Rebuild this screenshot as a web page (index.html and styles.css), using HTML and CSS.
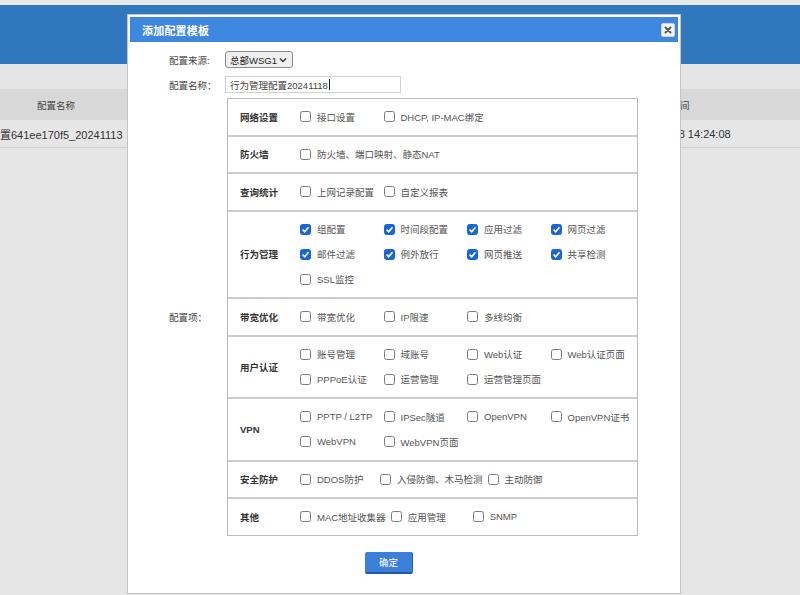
FILE: index.html
```html
<!DOCTYPE html>
<html lang="zh-CN">
<head>
<meta charset="utf-8">
<title>添加配置模板</title>
<link rel="stylesheet" href="styles.css">
</head>
<body>
<div class="page">
  <div class="strip"></div>
  <div class="banner"></div>
  <div class="toolbar"></div>
  <div class="bg-head">
    <div class="c-name">配置名称</div>
    <div class="c-time">时间</div>
  </div>
  <div class="bg-row">
    <div class="c-name c-left">置641ee170f5_20241113</div>
    <div class="c-time">2024-11-18 14:24:08</div>
  </div>
</div>

<div class="dialog">
  <div class="dlg-title">
    <span class="dlg-text">添加配置模板</span>
    <span class="close"><svg width="8" height="8" viewBox="0 0 8 8"><path d="M1.5 1.5 L6.5 6.5 M6.5 1.5 L1.5 6.5" stroke="#555" stroke-width="2" fill="none" stroke-linecap="round"/></svg></span>
  </div>
  <div class="dlg-body">
    <div class="form-row">
      <span class="lbl">配置来源:</span>
      <div class="select"><span>总部WSG1</span><svg width="8" height="6" viewBox="0 0 8 6"><path d="M1 1.5 L4 4.5 L7 1.5" stroke="#333" stroke-width="1.4" fill="none"/></svg></div>
    </div>
    <div class="form-row">
      <span class="lbl">配置名称：</span>
      <div class="input">行为管理配置20241118<span class="caret"></span></div>
    </div>
    <div class="form-row items-row">
      <span class="lbl">配置项：</span>
      <div class="cfg-table">
        <div class="cfg-row">
          <div class="cat">网络设置</div>
          <div class="opts">
            <label class="opt"><span class="box"></span>接口设置</label>
            <label class="opt"><span class="box"></span>DHCP, IP-MAC绑定</label>
          </div>
        </div>
        <div class="cfg-row">
          <div class="cat">防火墙</div>
          <div class="opts">
            <label class="opt"><span class="box"></span>防火墙、端口映射、静态NAT</label>
          </div>
        </div>
        <div class="cfg-row">
          <div class="cat">查询统计</div>
          <div class="opts">
            <label class="opt"><span class="box"></span>上网记录配置</label>
            <label class="opt"><span class="box"></span>自定义报表</label>
          </div>
        </div>
        <div class="cfg-row">
          <div class="cat">行为管理</div>
          <div class="opts">
            <label class="opt"><span class="box on"><svg width="11" height="11" viewBox="0 0 11 11"><path d="M2.6 5.7 L4.7 7.7 L8.5 3.3" stroke="#fff" stroke-width="1.7" fill="none"/></svg></span>组配置</label>
            <label class="opt"><span class="box on"><svg width="11" height="11" viewBox="0 0 11 11"><path d="M2.6 5.7 L4.7 7.7 L8.5 3.3" stroke="#fff" stroke-width="1.7" fill="none"/></svg></span>时间段配置</label>
            <label class="opt"><span class="box on"><svg width="11" height="11" viewBox="0 0 11 11"><path d="M2.6 5.7 L4.7 7.7 L8.5 3.3" stroke="#fff" stroke-width="1.7" fill="none"/></svg></span>应用过滤</label>
            <label class="opt"><span class="box on"><svg width="11" height="11" viewBox="0 0 11 11"><path d="M2.6 5.7 L4.7 7.7 L8.5 3.3" stroke="#fff" stroke-width="1.7" fill="none"/></svg></span>网页过滤</label>
            <label class="opt"><span class="box on"><svg width="11" height="11" viewBox="0 0 11 11"><path d="M2.6 5.7 L4.7 7.7 L8.5 3.3" stroke="#fff" stroke-width="1.7" fill="none"/></svg></span>邮件过滤</label>
            <label class="opt"><span class="box on"><svg width="11" height="11" viewBox="0 0 11 11"><path d="M2.6 5.7 L4.7 7.7 L8.5 3.3" stroke="#fff" stroke-width="1.7" fill="none"/></svg></span>例外放行</label>
            <label class="opt"><span class="box on"><svg width="11" height="11" viewBox="0 0 11 11"><path d="M2.6 5.7 L4.7 7.7 L8.5 3.3" stroke="#fff" stroke-width="1.7" fill="none"/></svg></span>网页推送</label>
            <label class="opt"><span class="box on"><svg width="11" height="11" viewBox="0 0 11 11"><path d="M2.6 5.7 L4.7 7.7 L8.5 3.3" stroke="#fff" stroke-width="1.7" fill="none"/></svg></span>共享检测</label>
            <label class="opt"><span class="box"></span>SSL监控</label>
          </div>
        </div>
        <div class="cfg-row">
          <div class="cat">带宽优化</div>
          <div class="opts">
            <label class="opt"><span class="box"></span>带宽优化</label>
            <label class="opt"><span class="box"></span>IP限速</label>
            <label class="opt"><span class="box"></span>多线均衡</label>
          </div>
        </div>
        <div class="cfg-row">
          <div class="cat">用户认证</div>
          <div class="opts">
            <label class="opt"><span class="box"></span>账号管理</label>
            <label class="opt"><span class="box"></span>域账号</label>
            <label class="opt"><span class="box"></span>Web认证</label>
            <label class="opt"><span class="box"></span>Web认证页面</label>
            <label class="opt"><span class="box"></span>PPPoE认证</label>
            <label class="opt"><span class="box"></span>运营管理</label>
            <label class="opt"><span class="box"></span>运营管理页面</label>
          </div>
        </div>
        <div class="cfg-row">
          <div class="cat">VPN</div>
          <div class="opts">
            <label class="opt"><span class="box"></span>PPTP / L2TP</label>
            <label class="opt"><span class="box"></span>IPSec隧道</label>
            <label class="opt"><span class="box"></span>OpenVPN</label>
            <label class="opt"><span class="box"></span>OpenVPN证书</label>
            <label class="opt"><span class="box"></span>WebVPN</label>
            <label class="opt"><span class="box"></span>WebVPN页面</label>
          </div>
        </div>
        <div class="cfg-row">
          <div class="cat">安全防护</div>
          <div class="opts inline">
            <label class="opt w80"><span class="box"></span>DDOS防护</label>
            <label class="opt wauto"><span class="box"></span>入侵防御、木马检测</label>
            <label class="opt"><span class="box"></span>主动防御</label>
          </div>
        </div>
        <div class="cfg-row">
          <div class="cat">其他</div>
          <div class="opts inline">
            <label class="opt wauto"><span class="box"></span>MAC地址收集器</label>
            <label class="opt w82"><span class="box"></span>应用管理</label>
            <label class="opt"><span class="box"></span>SNMP</label>
          </div>
        </div>
      </div>
    </div>
    <div class="actions">
      <button class="ok" type="button">确定</button>
    </div>
  </div>
</div>
</body>
</html>
```

FILE: styles.css
```css
* { box-sizing: border-box; }

html, body {
  margin: 0;
  padding: 0;
}

body {
  width: 800px;
  height: 595px;
  overflow: hidden;
  background: #e6e6e6;
  font-family: "Liberation Sans", "Noto Sans CJK SC", sans-serif;
  font-size: 9.5px;
  color: #444;
  position: relative;
}

/* ---------- background page ---------- */
.page {
  display: flex;
  flex-direction: column;
}

.strip {
  height: 5px;
  background: #e8e8e8;
}

.banner {
  height: 59px;
  background: #3078bd;
}

.toolbar {
  height: 25px;
  background: #e5e5e5;
}

.bg-head {
  height: 31px;
  background: #d8d8d8;
  display: flex;
  align-items: center;
  justify-content: space-between;
  color: #444;
  font-size: 9.5px;
}

.bg-row {
  height: 28px;
  background: #e6e6e6;
  border-bottom: 1px solid #d0d0d0;
  display: flex;
  align-items: center;
  justify-content: space-between;
  font-size: 11px;
  color: #333;
}

.c-name {
  width: 112px;
  text-align: center;
  white-space: nowrap;
}

.c-left {
  text-align: left;
}

.c-time {
  width: 130px;
  margin-right: 55px;
  text-align: center;
  white-space: nowrap;
}

/* ---------- dialog ---------- */
.dialog {
  position: absolute;
  left: 127px;
  top: 14px;
  width: 554px;
  height: 580px;
  background: #fff;
  border: 1px solid #c4c4c4;
  padding: 2px;
  display: flex;
  flex-direction: column;
}

.dlg-title {
  height: 25px;
  background: #3e87df;
  display: flex;
  align-items: center;
  justify-content: space-between;
  padding: 0 3px 0 12px;
}

.dlg-text {
  color: #fff;
  font-size: 11px;
  font-weight: bold;
  letter-spacing: 0.2px;
}

.close {
  width: 14px;
  height: 14px;
  background: #f3f3f3;
  border: 1px solid #d0d0d0;
  border-radius: 2px;
  display: flex;
  align-items: center;
  justify-content: center;
}

.dlg-body {
  padding: 9px 0 0 39px;
  display: flex;
  flex-direction: column;
}

.form-row {
  display: flex;
  align-items: center;
  height: 17px;
  margin-bottom: 8px;
}

.form-row.items-row {
  height: auto;
  margin-top: -3px;
  margin-bottom: 0;
}

.lbl {
  width: 56px;
  color: #444;
  white-space: nowrap;
}

.select {
  width: 68px;
  height: 17px;
  background: #efefef;
  border: 1px solid #8a8a8a;
  border-radius: 3px;
  display: flex;
  align-items: center;
  justify-content: space-between;
  padding: 0 5px 0 4px;
  color: #222;
}

.input {
  width: 176px;
  height: 17px;
  border: 1px solid #d2d2d2;
  display: flex;
  align-items: center;
  padding-left: 4px;
  color: #444;
}

.caret {
  display: inline-block;
  width: 1px;
  height: 11px;
  background: #222;
  margin-left: 1px;
}

/* ---------- config table ---------- */
.cfg-table {
  width: 411px;
  margin-left: 2px;
  border: 1px solid #bbbbbb;
  display: flex;
  flex-direction: column;
}

.cfg-row {
  display: flex;
  align-items: center;
}

.cfg-row + .cfg-row {
  border-top: 2px solid #cccccc;
}

.cat {
  width: 72px;
  padding-left: 12px;
  font-weight: bold;
  color: #333;
  white-space: nowrap;
}

.opts {
  flex: 1;
  display: grid;
  grid-template-columns: repeat(4, 83.5px);
  padding: 5px 0 5.5px;
}

.opts.inline {
  display: flex;
}

.opt {
  height: 25px;
  display: flex;
  align-items: center;
  gap: 6px;
  white-space: nowrap;
  color: #555;
}

.opt.w80 { width: 80px; }
.opt.w82 { width: 82px; }
.opt.wauto { margin-right: 5px; }

.box {
  width: 11px;
  height: 11px;
  flex: none;
  border: 1.5px solid #7b7b82;
  border-radius: 2.5px;
  background: #fff;
  display: flex;
  align-items: center;
  justify-content: center;
}

.box.on {
  background: #1765d6;
  border-color: #1765d6;
}

.box.on svg {
  flex: none;
}

/* ---------- actions ---------- */
.actions {
  display: flex;
  padding-top: 16px;
}

.ok {
  margin-left: 196px;
  width: 48px;
  height: 22px;
  background: #3b7fd9;
  border: none;
  border-bottom: 2px solid #2458a8;
  border-right: 1px solid #2c63b6;
  border-radius: 2px;
  color: #fff;
  font-family: "Liberation Sans", "Noto Sans CJK SC", sans-serif;
  font-size: 9.5px;
  padding: 0;
}
```
